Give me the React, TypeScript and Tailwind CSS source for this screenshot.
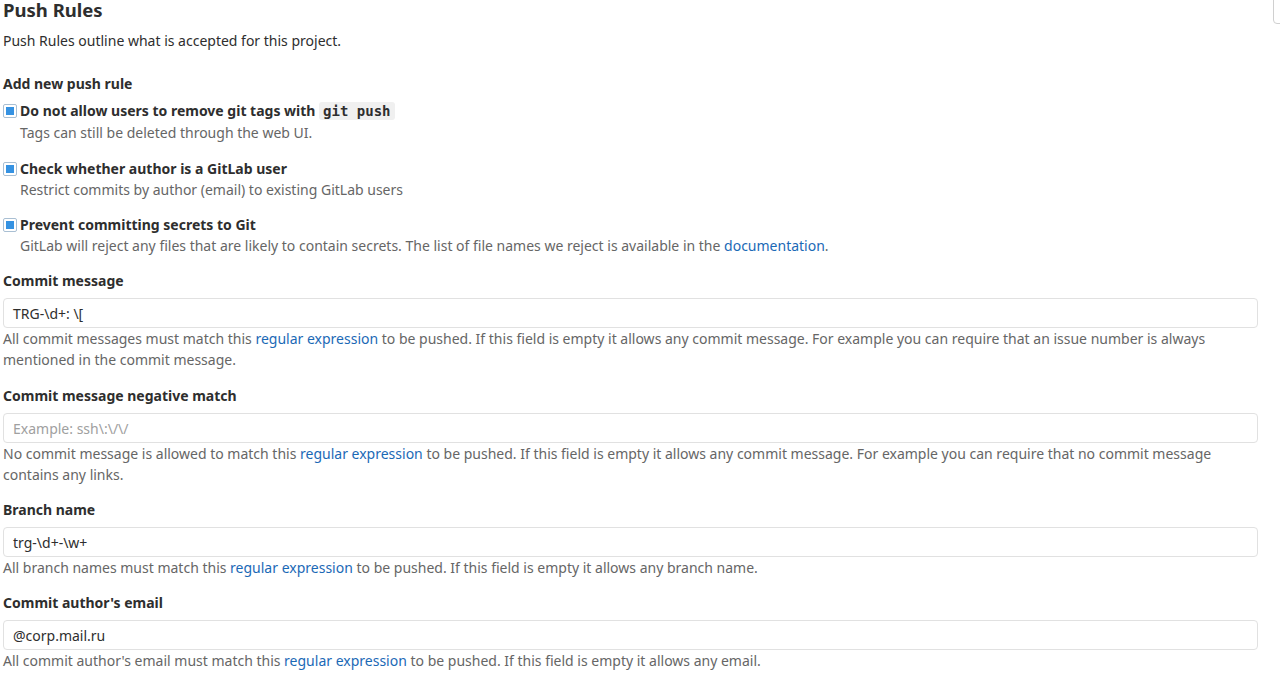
import React from "react";

const font = { fontFamily: '"Noto Sans", "Open Sans", sans-serif' };

function Check({ children, h = "h-[21px]" }: { children: React.ReactNode; h?: string }) {
  return (
    <div className={`flex items-center ${h}`}>
      <span className="w-[14px] h-[14px] border border-[#a9bfd3] rounded-[2px] bg-white p-[2px] mr-[3px] shrink-0">
        <span className="block w-full h-full bg-[#3592e2]" />
      </span>
      <span className="font-bold text-[#2e2e2e] text-[14px] leading-[21px]">{children}</span>
    </div>
  );
}

function Link({ children }: { children: React.ReactNode }) {
  return <a className="text-[#1b69b6]">{children}</a>;
}

function Field({
  label,
  value,
  placeholder,
  help,
  mt,
}: {
  label: string;
  value?: string;
  placeholder?: string;
  help: React.ReactNode;
  mt: string;
}) {
  return (
    <div className={mt}>
      <div className="font-bold text-[#2e2e2e] text-[14px] leading-[21px]">{label}</div>
      <div className="mt-[7px] h-[30px] border border-[#e1e1e1] rounded-[4px] flex items-center px-[9px] text-[14px]">
        {value ? (
          <span className="text-[#2e2e2e]">{value}</span>
        ) : (
          <span className="text-[#a0a0a0]">{placeholder}</span>
        )}
      </div>
      <div className="text-[#666666] text-[14px] leading-[21px]">{help}</div>
    </div>
  );
}

export default function App() {
  return (
    <div className="relative w-[1280px] h-[680px] overflow-hidden bg-white" style={font}>
      <div className="absolute left-[1273px] top-[-12px] w-[20px] h-[36px] border border-[#d0d0d0] rounded-[4px]" />
      <div className="pl-[3px] w-[1258px]">
        <div className="text-[18.5px] leading-[20px] font-bold text-[#2e2e2e]">Push Rules</div>
        <div className="mt-[10px] text-[14px] leading-[21px] text-[#2e2e2e]">
          Push Rules outline what is accepted for this project.
        </div>
        <div className="mt-[22px] font-bold text-[14px] leading-[21px] text-[#2e2e2e]">Add new push rule</div>

        <div className="mt-[6px]">
          <Check h="h-[22px]">
            Do not allow users to remove git tags with{" "}
            <code
              className="bg-[#f0f0f0] px-[4px] py-[1px] rounded-[3px] text-[14px]"
              style={{ fontFamily: '"DejaVu Sans Mono", monospace' }}
            >
              git push
            </code>
          </Check>
          <div className="pl-[17px] text-[#666666] text-[14px] leading-[21px]">
            Tags can still be deleted through the web UI.
          </div>
        </div>

        <div className="mt-[15px]">
          <Check>Check whether author is a GitLab user</Check>
          <div className="pl-[17px] text-[#666666] text-[14px] leading-[21px]">
            Restrict commits by author (email) to existing GitLab users
          </div>
        </div>

        <div className="mt-[14px]">
          <Check>Prevent committing secrets to Git</Check>
          <div className="pl-[17px] text-[#666666] text-[14px] leading-[21px]">
            GitLab will reject any files that are likely to contain secrets. The list of file names we reject is
            available in the <Link>documentation</Link>.
          </div>
        </div>

        <Field
          mt="mt-[14px]"
          label="Commit message"
          value="TRG-\d+: \["
          help={
            <>
              All commit messages must match this <Link>regular expression</Link> to be pushed. If this field is
              empty it allows any commit message. For example you can require that an issue number is always
              mentioned in the commit message.
            </>
          }
        />
        <Field
          mt="mt-[15px]"
          label="Commit message negative match"
          placeholder="Example: ssh\:\/\/"
          help={
            <>
              No commit message is allowed to match this <Link>regular expression</Link> to be pushed. If this field
              is empty it allows any commit message. For example you can require that no commit message contains
              any links.
            </>
          }
        />
        <Field
          mt="mt-[14px]"
          label="Branch name"
          value="trg-\d+-\w+"
          help={
            <>
              All branch names must match this <Link>regular expression</Link> to be pushed. If this field is empty
              it allows any branch name.
            </>
          }
        />
        <Field
          mt="mt-[14px]"
          label="Commit author's email"
          value="@corp.mail.ru"
          help={
            <>
              All commit author's email must match this <Link>regular expression</Link> to be pushed. If this field
              is empty it allows any email.
            </>
          }
        />
      </div>
    </div>
  );
}
